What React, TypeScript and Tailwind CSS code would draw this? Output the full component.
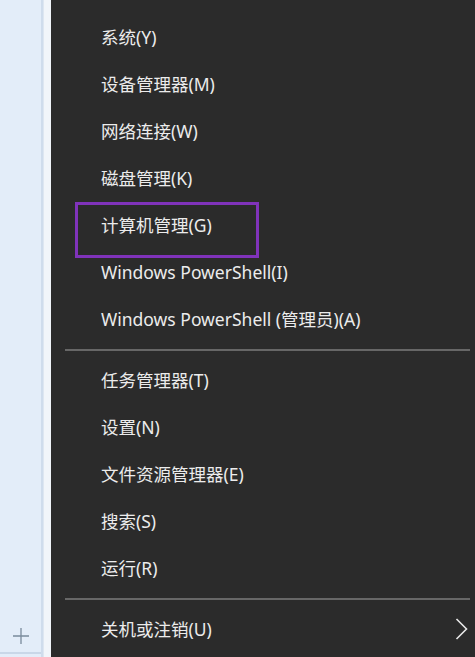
const font = {
  fontFamily: '"Noto Sans", "Noto Sans CJK SC", sans-serif',
};

const groups: string[][] = [
  [
    "事件查看器(V)",
    "系统(Y)",
    "设备管理器(M)",
    "网络连接(W)",
    "磁盘管理(K)",
    "计算机管理(G)",
    "Windows PowerShell(I)",
    "Windows PowerShell (管理员)(A)",
  ],
  ["任务管理器(T)", "设置(N)", "文件资源管理器(E)", "搜索(S)", "运行(R)"],
  ["关机或注销(U)"],
];

function Item({ label, first, sub, marked }: { label: string; first?: boolean; sub?: boolean; marked?: boolean }) {
  return (
    <div
      className={
        "relative h-[47px] shrink-0 flex items-center pl-[50px] pr-[7px] text-[17.5px] text-[#ececec] " +
        (first ? "-mt-[33px]" : "")
      }
    >
      {marked && (
        <div className="absolute left-[24px] top-[0px] w-[184px] h-[56px] border-[3px] border-[#8033bb]" />
      )}
      <span className="flex-1 whitespace-nowrap">{label}</span>
      {sub && (
        <svg width="13" height="22" viewBox="0 0 13 22" fill="none" className="mb-[1px]">
          <path d="M1.5 1 L11.5 11 L1.5 21" stroke="#e8e8e8" strokeWidth="1.6" />
        </svg>
      )}
    </div>
  );
}

export default function App() {
  return (
    <div className="flex w-[475px] h-[657px] overflow-hidden" style={font}>
      {/* taskbar edge */}
      <div className="w-[43px] shrink-0 flex flex-col bg-[#e3edf9] border-r-2 border-[#cfdcec]">
        <div className="flex-1" />
        <div className="h-[35px] flex items-center justify-center border-b-2 border-[#c9d7e8] mb-[3px]">
          <svg width="16" height="16" viewBox="0 0 16 16">
            <path d="M8 0 V16 M0 8 H16" stroke="#7a8a9c" strokeWidth="1.3" />
          </svg>
        </div>
      </div>
      <div className="w-[8px] shrink-0 bg-[#f1f5fa] border-l border-[#dde6f1]" />

      {/* win+x menu */}
      <div className="flex-1 bg-[#2b2b2b] flex flex-col">
        {groups.map((g, gi) => (
          <div key={gi} className="flex flex-col">
            {gi > 0 && (
              <div className="h-[14px] flex items-center pl-[14px] pr-[5px] shrink-0">
                <div className="h-[2px] w-full bg-[#676767]" />
              </div>
            )}
            {g.map((label, i) => (
              <Item
                key={label}
                label={label}
                first={gi === 0 && i === 0}
                sub={gi === 2}
                marked={label === "计算机管理(G)"}
              />
            ))}
          </div>
        ))}
      </div>
    </div>
  );
}
